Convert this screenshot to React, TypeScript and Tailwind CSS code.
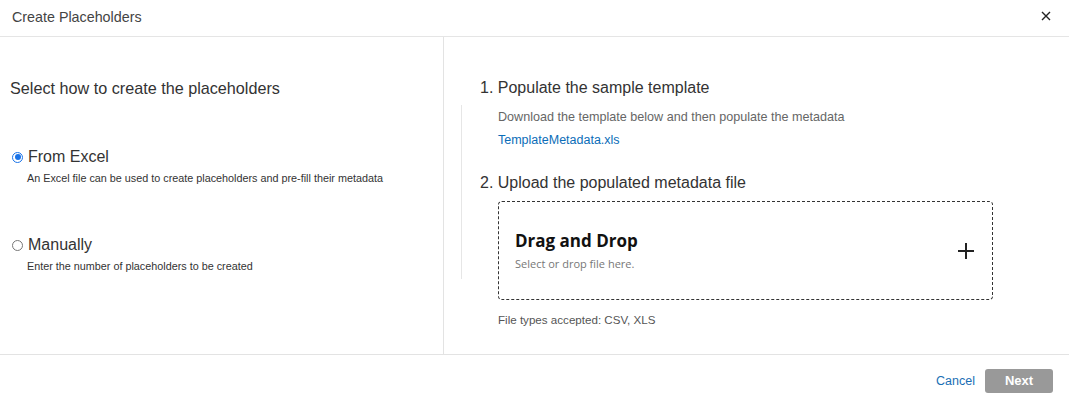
import React from "react";

export default function App() {
  const arial = { fontFamily: '"Liberation Sans", Arial, sans-serif' };
  return (
    <div className="w-[1069px] h-[401px] bg-white flex flex-col text-[#333]" style={arial}>
      {/* header */}
      <div className="h-[37px] shrink-0 border-b border-[#e5e5e5] flex items-center justify-between pl-[12px] pr-[18px]">
        <div className="text-[14.3px] text-[#444] leading-[16px] -mt-[3px]">Create Placeholders</div>
        <svg width="10" height="10" viewBox="0 0 10 10" className="-mt-[4px]">
          <path d="M1 1 L9 9 M9 1 L1 9" stroke="#222" strokeWidth="1.4" />
        </svg>
      </div>
      {/* body */}
      <div className="h-[317px] shrink-0 flex">
        <div className="w-[444px] shrink-0 border-r border-[#e3e3e3] pl-[10px] pt-[41px]">
          <div className="text-[16.2px] leading-[20px] text-[#333]">Select how to create the placeholders</div>
          <div className="mt-[49px] pl-[2px]">
            <div className="flex items-center gap-[5px] h-[20px]">
              <span className="w-[11px] h-[11px] rounded-full border-[1.5px] border-[#1a73e8] flex items-center justify-center">
                <span className="w-[6px] h-[6px] rounded-full bg-[#1a73e8]" />
              </span>
              <span className="text-[16px] leading-[20px] text-[#333]">From Excel</span>
            </div>
            <div className="pl-[15px] mt-[5px] text-[10.8px] leading-[13px] text-[#333]">
              An Excel file can be used to create placeholders and pre-fill their metadata
            </div>
          </div>
          <div className="mt-[50px] pl-[2px]">
            <div className="flex items-center gap-[5px] h-[20px]">
              <span className="w-[11px] h-[11px] rounded-full border border-[#777]" />
              <span className="text-[16px] leading-[20px] text-[#333]">Manually</span>
            </div>
            <div className="pl-[15px] mt-[5px] text-[10.8px] leading-[13px] text-[#333]">
              Enter the number of placeholders to be created
            </div>
          </div>
        </div>
        <div className="flex-1 relative pl-[36px] pt-[41px]">
          <div className="absolute left-[17px] top-[68px] w-px h-[174px] bg-[#e6e6e6]" />
          <div className="text-[16px] leading-[20px] text-[#333]">1. Populate the sample template</div>
          <div className="pl-[18px]">
            <div className="mt-[11px] text-[12.6px] leading-[16px] text-[#666]">
              Download the template below and then populate the metadata
            </div>
            <div className="mt-[7px] text-[12.5px] leading-[16px] text-[#0b6db8]">TemplateMetadata.xls</div>
          </div>
          <div className="mt-[25px] text-[16px] leading-[20px] text-[#333]">2. Upload the populated metadata file</div>
          <div className="pl-[18px]">
            <div className="mt-[8px] w-[495px] h-[99px] border border-dashed border-[#333] rounded-[4px] flex items-center justify-between pl-[16px] pr-[18px]">
              <div style={{ fontFamily: '"Open Sans", "Noto Sans", sans-serif' }}>
                <div className="text-[17px] leading-[22px] font-bold text-[#111]">Drag and Drop</div>
                <div className="text-[11px] leading-[14px] text-[#777] mt-[5px]">Select or drop file here.</div>
              </div>
              <svg width="16" height="16" viewBox="0 0 16 16">
                <path d="M8 0 V16 M0 8 H16" stroke="#222" strokeWidth="2" />
              </svg>
            </div>
            <div className="mt-[13px] text-[11.6px] leading-[13px] text-[#555]">File types accepted: CSV, XLS</div>
          </div>
        </div>
      </div>
      {/* footer */}
      <div className="flex-1 border-t border-[#e3e3e3] flex items-start justify-end pr-[16px] pt-[14px]">
        <div className="text-[12.5px] leading-[24px] text-[#1a6fb5] mr-[10px]">Cancel</div>
        <div className="w-[68px] h-[24px] rounded-[3px] bg-[#999] text-white text-[13px] font-bold flex items-center justify-center">
          Next
        </div>
      </div>
    </div>
  );
}
